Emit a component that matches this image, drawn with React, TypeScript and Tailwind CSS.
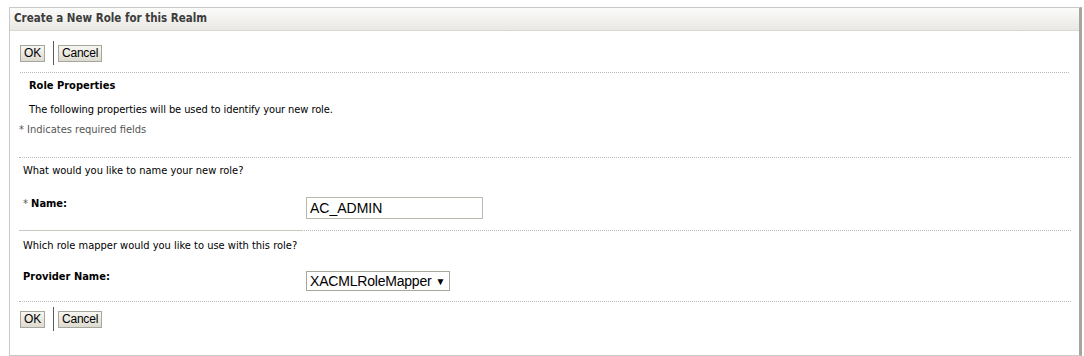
import React from "react";

const font = "font-['Tahoma','DejaVu_Sans_Condensed','Liberation_Sans',sans-serif]";

function Btn({ children }: { children: React.ReactNode }) {
  return (
    <button className="h-[17px] px-[3px] border border-[#a7a69c] bg-gradient-to-b from-[#f7f6f1] to-[#dddbd0] text-[12px] leading-[15px] tracking-[-0.2px] text-black font-['Liberation_Sans',Arial,sans-serif]">
      {children}
    </button>
  );
}

function ButtonBar() {
  return (
    <div className="flex items-center h-[24px] pl-[10px]">
      <Btn>OK</Btn>
      <div className="w-px h-[24px] bg-[#5a5a5a] ml-[8px] mr-[4px]" />
      <Btn>Cancel</Btn>
    </div>
  );
}

export default function App() {
  return (
    <div className={`bg-white w-[1084px] h-[356px] pt-[7px] pl-[9px] ${font} text-[11px] text-black`}>
      <div className="w-[1073px] h-[349px] border border-[#c9c9c6] border-r-[3px] border-r-[#a5a49f] flex flex-col">
        <div className="h-[23px] border-b border-[#d9d8d3] bg-gradient-to-b from-[#fbfbfa] to-[#e9e8e4] flex items-center pl-[4px]">
          <span className="text-[11.5px] font-bold text-[#3c3c3c]">Create a New Role for this Realm</span>
        </div>
        <div className="pt-[10px]">
          <ButtonBar />
        </div>
        <div className="mt-[7px] mx-[10px] border-t border-dotted border-[#b9b9b9]" />
        <div className="h-[26px] flex items-center pl-[19px] text-[11px] font-bold">Role Properties</div>
        <div className="h-[23px] flex items-center pl-[19px] tracking-[-0.08px]">
          The following properties will be used to identify your new role.
        </div>
        <div className="h-[16px] flex items-center pl-[9px] text-[#555]">* Indicates required fields</div>
        <div className="mt-[19px] ml-[9px] mr-[8px] border-t border-dotted border-[#b9b9b9]" />
        <div className="h-[26px] flex items-center pl-[13px]">What would you like to name your new role?</div>
        <div className="flex items-start h-[46px] pt-[13px]">
          <div className="w-[296px] pl-[13px] leading-[14px] font-bold">
            <span className="font-normal text-[#555]">* </span>Name:
          </div>
          <input
            readOnly
            value="AC_ADMIN"
            className="w-[177px] h-[22px] border border-[#b9b6aa] px-[3px] text-[14px] font-['Liberation_Sans',Arial,sans-serif] text-black outline-none"
          />
        </div>
        <div className="flex ml-[9px] mr-[8px]">
          <div className="w-[283px] border-t border-[#c8c7c0]" />
          <div className="flex-1 border-t border-dotted border-[#b9b9b9]" />
        </div>
        <div className="h-[30px] flex items-center pl-[13px]">Which role mapper would you like to use with this role?</div>
        <div className="flex items-start pt-[9px] h-[40px]">
          <div className="w-[296px] pl-[13px] leading-[14px] font-bold">Provider Name:</div>
          <div className="mt-[1px] h-[20px] border border-[#a9a69b] flex items-center pl-[3px] pr-[4px] text-[14px] tracking-[-0.2px] font-['Liberation_Sans',Arial,sans-serif] text-black">
            XACMLRoleMapper
            <span className="ml-[4px] text-[10px]">▼</span>
          </div>
        </div>
        <div className="ml-[9px] mr-[8px] border-t border-dotted border-[#b9b9b9]" />
        <div className="pt-[5px]">
          <ButtonBar />
        </div>
      </div>
    </div>
  );
}
